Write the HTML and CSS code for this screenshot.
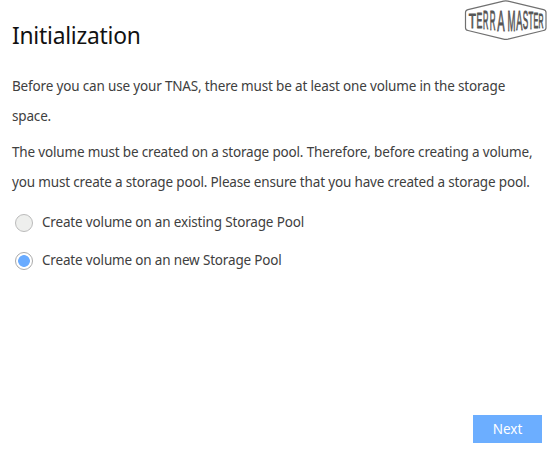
FILE: index.html
```html
<!DOCTYPE html>
<html lang="en">
<head>
<meta charset="utf-8">
<title>Initialization</title>
<link rel="stylesheet" href="styles.css">
</head>
<body>
<main class="page">
  <header class="header">
    <h1 class="title">Initialization</h1>
    <svg class="logo" width="84" height="41" viewBox="0 0 84 41" role="img" aria-label="TerraMaster">
      <path class="logo-frame" d="M5 9.7 40.5 1.1Q42.7 .6 45 1.1L80.5 9.7Q83 10.3 83 12.5V27.7Q83 29.9 80.5 30.5L45 39.2Q42.7 39.7 40.5 39.2L5 30.5Q2.5 29.9 2.5 27.7V12.5Q2.5 10.3 5 9.7Z"/>
      <g class="logo-text" transform="scale(.4 1)">
        <text><tspan x="14.5" y="27.6" font-size="20" textLength="18" lengthAdjust="spacingAndGlyphs">T</tspan><tspan x="34" y="28.3" font-size="22.5" textLength="14.5" lengthAdjust="spacingAndGlyphs">E</tspan><tspan x="50.2" y="29" font-size="25" textLength="13.5" lengthAdjust="spacingAndGlyphs">R</tspan><tspan x="66.7" y="29.8" font-size="27.5" textLength="14.5" lengthAdjust="spacingAndGlyphs">R</tspan><tspan x="85.7" y="30.6" font-size="30" textLength="18.5" lengthAdjust="spacingAndGlyphs">A</tspan> <tspan x="111" y="30.6" font-size="30" textLength="20" lengthAdjust="spacingAndGlyphs">M</tspan><tspan x="133" y="30" font-size="28" textLength="15.5" lengthAdjust="spacingAndGlyphs">A</tspan><tspan x="149.3" y="29.4" font-size="26" textLength="13.6" lengthAdjust="spacingAndGlyphs">S</tspan><tspan x="163.7" y="28.8" font-size="24" textLength="12" lengthAdjust="spacingAndGlyphs">T</tspan><tspan x="176.3" y="28.2" font-size="22" textLength="12" lengthAdjust="spacingAndGlyphs">E</tspan><tspan x="189" y="27.6" font-size="20.5" textLength="12.5" lengthAdjust="spacingAndGlyphs">R</tspan></text>
      </g>
    </svg>
  </header>
  <section class="intro">
    <p>Before you can use your TNAS, there must be at least one volume in the storage<br>space.</p>
    <p>The volume must be created on a storage pool. Therefore, before creating a volume,<br>you must create a storage pool. Please ensure that you have created a storage pool.</p>
  </section>
  <form class="options">
    <label class="option"><input class="radio off" type="radio" name="pool"><span>Create volume on an existing Storage Pool</span></label>
    <label class="option"><input class="radio" type="radio" name="pool" checked><span>Create volume on an new Storage Pool</span></label>
  </form>
  <footer class="footer"><button class="next" type="button">Next</button></footer>
</main>
</body>
</html>
```
FILE: styles.css
```css
* { box-sizing: border-box; }
body { margin: 0; background: #fff; color: #404040; font: 13.5px/30px "Noto Sans", sans-serif; letter-spacing: -.165px; }
.page { height: 451px; padding: 0 5px 8px 12px; display: flex; flex-direction: column; overflow: hidden; }
.header { display: flex; justify-content: space-between; height: 71px; }
.title { margin: 20px 0 0; font-size: 22.8px; line-height: 32px; font-weight: 400; color: #111; letter-spacing: -.23px; }
.logo { display: block; letter-spacing: 0; }
.logo-frame { fill: none; stroke: #707070; stroke-width: 1.2; }
.logo-text { font-family: "Liberation Sans", sans-serif; fill: #555; stroke: #555; stroke-width: .9; }
.intro p { margin: 0 0 6px; white-space: nowrap; }
.options { display: flex; flex-direction: column; gap: 8px; margin-top: 4px; }
.option { display: flex; align-items: center; gap: 9px; height: 30px; padding-left: 3px; white-space: nowrap; }
.radio { appearance: none; width: 18px; height: 18px; margin: 2px 0 0; border: 1px solid #aaa; border-radius: 50%; background: radial-gradient(circle, #69abff 5.5px, #fff 6.2px); }
.radio.off { background: #eeefed; border-color: #bbb; }
.footer { display: flex; justify-content: flex-end; margin-top: auto; padding-right: 5px; }
.next { width: 69px; height: 28px; padding: 0; border: 0; background: #6caeff; color: #fff; font: 13.5px/28px "Noto Sans", sans-serif; }
```
